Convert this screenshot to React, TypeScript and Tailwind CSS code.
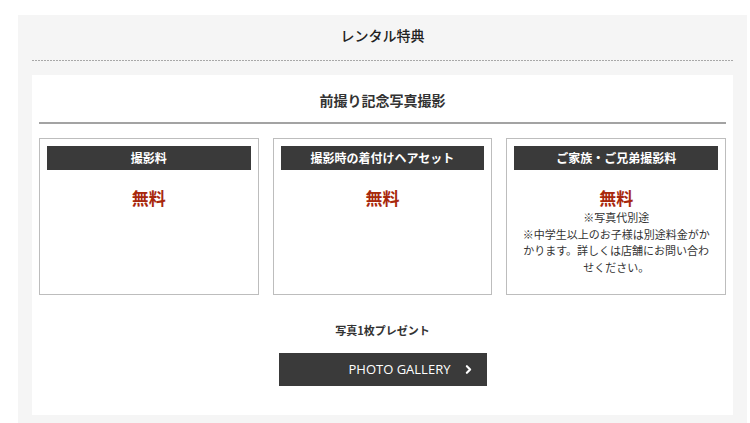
import { ChevronRight } from 'lucide-react';

const jp = { fontFamily: '"Noto Sans CJK JP", "Noto Sans", sans-serif' };

interface Benefit {
    title: string;
    price: string;
    notes?: string[];
}

const benefits: Benefit[] = [
    { title: '撮影料', price: '無料' },
    { title: '撮影時の着付けヘアセット', price: '無料' },
    {
        title: 'ご家族・ご兄弟撮影料',
        price: '無料',
        notes: ['※写真代別途', '※中学生以上のお子様は別途料金がかかります。詳しくは店舗にお問い合わせください。'],
    },
];

function BenefitBox({ benefit }: { benefit: Benefit }) {
    return (
        <div className="h-[157px] border border-[#bdbdbd] p-[7px]">
            <div className="flex h-[24px] items-center justify-center bg-[#3a3a3a] text-[12px] font-bold text-white">
                {benefit.title}
            </div>
            <div className="mt-[17px] text-center text-[17px] font-bold leading-[22px] text-[#a8280c]">
                {benefit.price}
            </div>
            {benefit.notes && (
                <div className="px-[4px] text-center text-[11px] leading-[16.5px] text-[#333]">
                    {benefit.notes.map((n) => (
                        <p key={n}>{n}</p>
                    ))}
                </div>
            )}
        </div>
    );
}

export default function App() {
    return (
        <div className="min-h-[423px] bg-white pt-[15px] pl-[18px] pr-[3px]" style={jp}>
            <div className="bg-[#f5f5f5] px-[14px] pb-[9px]">
                <div className="pt-[10px] text-center text-[14px] font-medium leading-[20px] text-[#222]">
                    レンタル特典
                </div>
                <div className="mt-[15px] h-px bg-[linear-gradient(to_right,#a8a8a8_2px,transparent_2px)] bg-[length:3px_1px]" />
                <div className="mt-[14px] bg-white px-[7px] pb-[29px]">
                    <div className="pt-[15px] text-center text-[14px] font-bold leading-[20px] text-[#333]">
                        前撮り記念写真撮影
                    </div>
                    <div className="mt-[12px] h-[2px] bg-[#a3a3a3]" />
                    <div className="mt-[14px] grid grid-cols-3 gap-[14px]">
                        {benefits.map((b) => (
                            <BenefitBox key={b.title} benefit={b} />
                        ))}
                    </div>
                    <div className="mt-[27px] text-center text-[11px] font-bold leading-[16px] text-[#333]">
                        写真1枚プレゼント
                    </div>
                    <div className="mt-[15px] flex justify-center">
                        <button className="flex h-[33px] w-[208px] items-center bg-[#3a3a3a] pl-[70px] text-white">
                            <span className="text-[13px]" style={{ fontFamily: '"Open Sans", sans-serif' }}>
                                PHOTO GALLERY
                            </span>
                            <ChevronRight className="ml-[12px] h-[13px] w-[13px]" strokeWidth={4} />
                        </button>
                    </div>
                </div>
            </div>
        </div>
    );
}
